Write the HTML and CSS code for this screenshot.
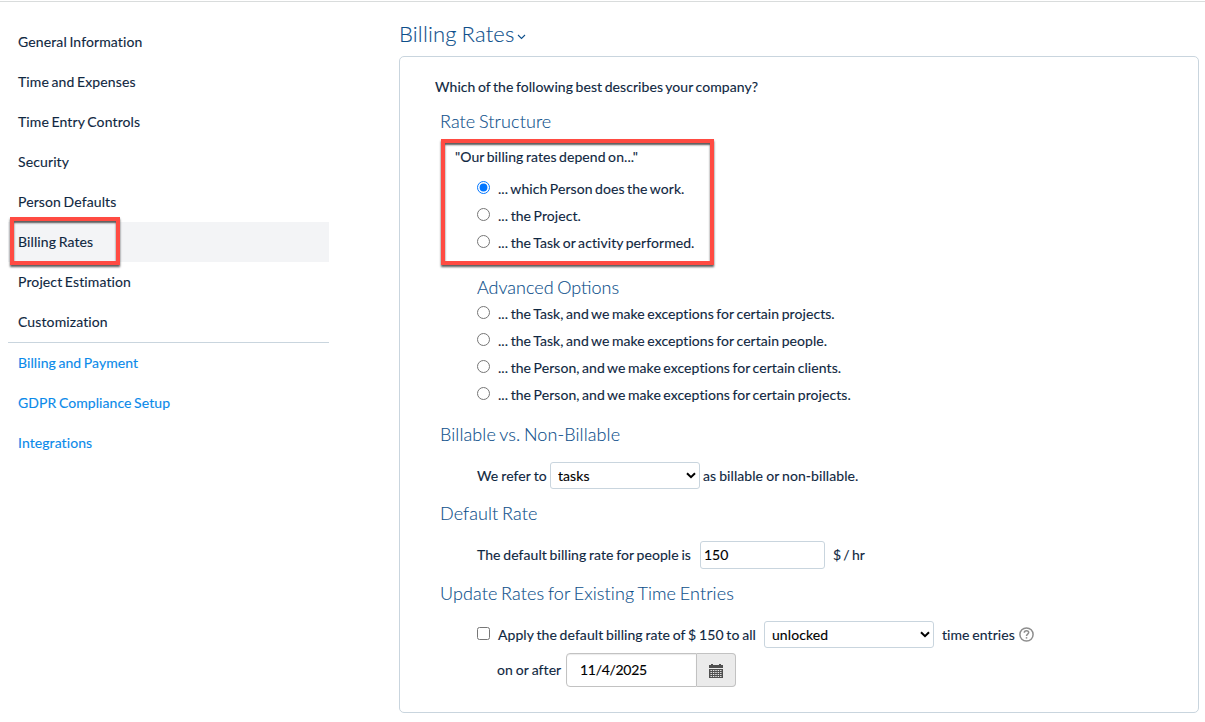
FILE: index.html
```html
<!DOCTYPE html>
<html lang="en">
<head>
<meta charset="utf-8">
<title>Billing Rates</title>
<link rel="stylesheet" href="styles.css">
</head>
<body>
<div class="page">
  <nav class="sidebar">
    <a class="nav-item">General Information</a>
    <a class="nav-item">Time and Expenses</a>
    <a class="nav-item">Time Entry Controls</a>
    <a class="nav-item">Security</a>
    <a class="nav-item">Person Defaults</a>
    <a class="nav-item active">Billing Rates<span class="callout callout-nav"></span></a>
    <a class="nav-item">Project Estimation</a>
    <a class="nav-item">Customization</a>
    <div class="nav-links">
      <a class="nav-item link">Billing and Payment</a>
      <a class="nav-item link">GDPR Compliance Setup</a>
      <a class="nav-item link">Integrations</a>
    </div>
  </nav>
  <main class="main">
    <h1 class="title">Billing Rates<svg class="title-caret" width="9" height="6" viewBox="0 0 9 6"><path d="M1 1l3.5 3.5L8 1" fill="none" stroke="currentColor" stroke-width="1.1"/></svg></h1>
    <section class="panel">
      <p class="question">Which of the following best describes your company?</p>
      <h2 class="heading">Rate Structure</h2>
      <div class="structure">
        <p class="prompt">"Our billing rates depend on..."</p>
        <label class="option"><input type="radio" name="rate" checked><span>... which Person does the work.</span></label>
        <label class="option"><input type="radio" name="rate"><span>... the Project.</span></label>
        <label class="option"><input type="radio" name="rate"><span>... the Task or activity performed.</span></label>
        <span class="callout callout-structure"></span>
      </div>
      <div class="advanced">
        <h2 class="heading heading-advanced">Advanced Options</h2>
        <label class="option"><input type="radio" name="rate"><span>... the Task, and we make exceptions for certain projects.</span></label>
        <label class="option"><input type="radio" name="rate"><span>... the Task, and we make exceptions for certain people.</span></label>
        <label class="option"><input type="radio" name="rate"><span>... the Person, and we make exceptions for certain clients.</span></label>
        <label class="option"><input type="radio" name="rate"><span>... the Person, and we make exceptions for certain projects.</span></label>
      </div>
      <h2 class="heading heading-billable">Billable vs. Non-Billable</h2>
      <div class="row row-billable">
        <span class="refer">We refer to</span>
        <span class="select-wrap select-tasks"><select class="select"><option>tasks</option></select><svg class="select-caret" width="10" height="7" viewBox="0 0 10 7"><path d="M1 1.2l4 4 4-4" fill="none" stroke="#000" stroke-width="2"/></svg></span>
        <span class="after-tasks">as billable or non-billable.</span>
      </div>
      <h2 class="heading heading-default">Default Rate</h2>
      <div class="row row-default">
        <span class="default-label">The default billing rate for people is</span>
        <input class="rate-input" type="text" value="150">
        <span class="unit">$ / hr</span>
      </div>
      <h2 class="heading heading-update">Update Rates for Existing Time Entries</h2>
      <div class="row row-update">
        <label class="apply"><input type="checkbox"><span>Apply the default billing rate of $ 150 to all</span></label>
        <span class="select-wrap select-locked"><select class="select"><option>unlocked</option></select><svg class="select-caret" width="10" height="7" viewBox="0 0 10 7"><path d="M1 1.2l4 4 4-4" fill="none" stroke="#000" stroke-width="2"/></svg></span>
        <span class="entries">time entries</span>
        <svg class="help" width="17" height="17" viewBox="0 0 17 17" fill="none" stroke="#8e8e8e" stroke-width="1.5"><circle cx="8.5" cy="8.5" r="6.6"/><path d="M6.3 6.8c0-1.3.9-2.1 2.2-2.1s2.2.8 2.2 1.9c0 1.5-2.2 1.6-2.2 3.3"/><path d="M8.5 11.1v1.5"/></svg>
      </div>
      <div class="row row-date">
        <span class="date-label">on or after</span>
        <input class="date-input" type="text" value="11/4/2025">
        <button class="date-button" aria-label="Open calendar"><svg width="14" height="14" viewBox="0 0 14 14"><path d="M0 1h14v3H0z M2 0h2v2H2z M10 0h2v2h-2z M0 5h14v9H0z" fill="#505050"/><path d="M1.5 6.5h11M1.5 8.5h11M1.5 10.5h11M1.5 12.5h11" stroke="#ebebeb" stroke-width="1" stroke-dasharray="1.4 1"/></svg></button>
      </div>
    </section>
  </main>
</div>
</body>
</html>
```

FILE: styles.css
```css
* { box-sizing: border-box; }
body {
  margin: 0;
  background: #fff;
  color: #0f2741;
  font: 400 14px/20px Lato, sans-serif;
  letter-spacing: .07px;
  word-spacing: -1.15px;
  -webkit-text-stroke: .12px;
}
h1, h2, p { margin: 0; }
.page {
  display: flex;
  margin-top: 1px;
  border-top: 1px solid #d9dcdc;
  height: 721px;
  overflow: hidden;
}
.sidebar { width: 321px; margin: 20px 70px 0 8px; flex: none; letter-spacing: .12px; }
.nav-item {
  display: flex;
  position: relative;
  align-items: center;
  height: 40px;
  padding-left: 10px;
}
.nav-item.active { background: #f3f4f6; }
.nav-links { border-top: 1px solid #c9d5de; letter-spacing: .08px; }
.nav-item.link { color: #0a8aea; }
.callout {
  position: absolute;
  border: 4px solid #ff4b42;
  box-shadow: 0 2px 2px rgba(0, 0, 0, .65), inset 0 2px 2px rgba(0, 0, 0, .65);
  pointer-events: none;
}
.callout-nav { left: 2px; top: -5px; width: 110px; height: 48px; }
.callout-structure { left: 0; top: 0; width: 273px; height: 126px; }
.main { width: 800px; flex: none; }
.title {
  display: flex;
  align-items: center;
  height: 54px;
  padding-top: 10px;
  color: #0d4f8b;
  font-size: 22px;
  font-weight: 300;
  line-height: 30px;
  letter-spacing: .16px;
}
.title-caret { margin: 6px 0 0 3px; }
.panel {
  height: 657px;
  border: 1px solid #c9d5de;
  border-radius: 5px;
  padding: 20px 0 0 35px;
}
.heading {
  margin-left: 5px;
  color: #0d4f8b;
  font-size: 18px;
  font-weight: 300;
  line-height: 24px;
  letter-spacing: .1px;
  word-spacing: -1.3px;
}
.question { height: 32px; }
.structure {
  position: relative;
  width: 273px;
  height: 126px;
  margin: 6px 0 0 6px;
  padding: 8px 0 0 36px;
}
.prompt { height: 28px; margin-left: -22px; white-space: nowrap; }
.option { display: flex; align-items: center; height: 27px; white-space: nowrap; }
.option input { width: 13px; height: 13px; margin: 0 8px 3px 0; accent-color: #0075ff; }
.advanced { margin: 10px 0 0 42px; }
.heading-advanced { margin-left: 0; height: 25px; letter-spacing: 0; }
.heading-billable { margin-top: 14px; }
.row { display: flex; align-items: center; margin-left: 42px; white-space: nowrap; }
.row-billable { height: 27px; margin-top: 16px; word-spacing: -.6px; }
.refer { width: 73px; }
.select-wrap { position: relative; height: 27px; }
.select {
  width: 100%;
  height: 27px;
  padding: 0 7px;
  appearance: none;
  border: 1px solid #c9d5de;
  border-radius: 3px;
  background: #fff;
  color: #000;
  font: inherit;
  letter-spacing: inherit;
}
.select-caret { position: absolute; right: 4px; top: 10px; }
.select-tasks { width: 150px; }
.after-tasks { margin-left: 3px; }
.heading-default { margin-top: 12px; }
.row-default { height: 28px; margin-top: 16px; word-spacing: -.95px; }
.default-label { width: 223px; }
.rate-input {
  width: 125px;
  height: 28px;
  padding: 0 3px 1px;
  border: 1px solid #c9d5de;
  border-radius: 3px;
  color: #000;
  font: inherit;
}
.unit { margin-left: 8px; word-spacing: -1.5px; }
.heading-update { margin-top: 12px; }
.row-update { height: 27px; margin-top: 16px; word-spacing: -.9px; }
.apply { display: flex; align-items: center; width: 287px; }
.apply input { width: 13px; height: 13px; margin: 0 8px 3px 0; }
.select-locked { width: 170px; }
.entries { width: 76px; margin-left: 8px; }
.row-date { height: 34px; margin: 5px 0 0 62px; word-spacing: -.7px; }
.date-label { width: 69px; }
.date-input {
  width: 131px;
  height: 34px;
  padding: 0 13px 1px;
  border: 1px solid #c2c2c2;
  border-radius: 4px 0 0 4px;
  box-shadow: inset 0 1px 1px rgba(0, 0, 0, .08);
  color: #000;
  font: inherit;
  letter-spacing: -.3px;
}
.date-button {
  display: flex;
  align-items: center;
  justify-content: center;
  width: 39px;
  height: 34px;
  padding: 2px 0 0;
  border: 1px solid #c2c2c2;
  border-left: 0;
  border-radius: 0 4px 4px 0;
  background: #ebebeb;
}
```
